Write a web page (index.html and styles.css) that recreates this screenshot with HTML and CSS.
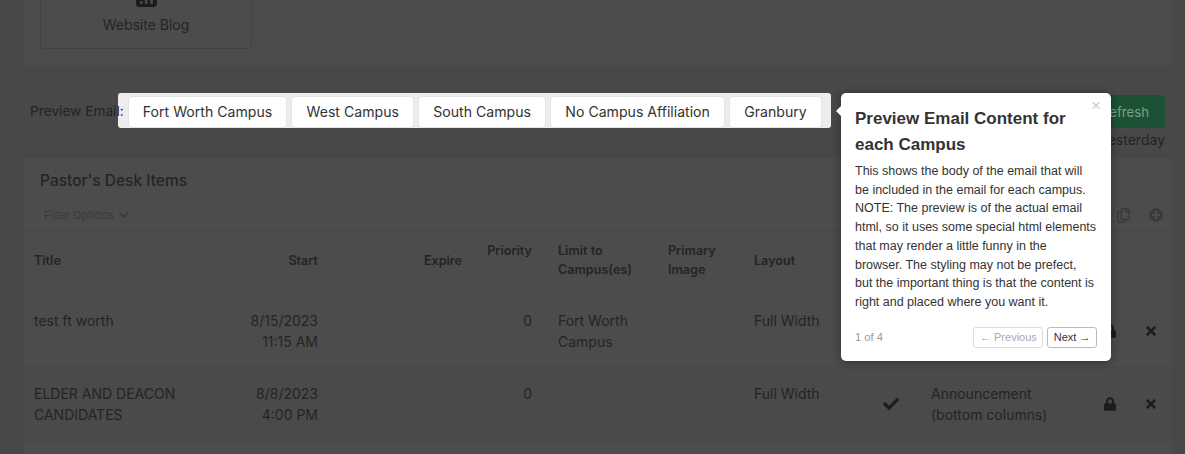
FILE: index.html
```html
<!DOCTYPE html>
<html lang="en">
<head>
<meta charset="utf-8">
<title>Pastor's Desk Items</title>
<link rel="stylesheet" href="styles.css">
</head>
<body>
<svg class="sprite" aria-hidden="true">
  <symbol id="i-check" viewBox="0 0 512 512"><path d="M173.898 439.404l-166.4-166.4c-9.997-9.997-9.997-26.206 0-36.204l36.203-36.204c9.997-9.998 26.207-9.998 36.204 0L192 312.69 432.095 72.596c9.997-9.997 26.207-9.997 36.204 0l36.203 36.204c9.997 9.997 9.997 26.206 0 36.204l-294.4 294.401c-9.998 9.997-26.207 9.997-36.204-.001z"/></symbol>
  <symbol id="i-times" viewBox="0 0 352 512"><path d="M242.72 256l100.07-100.07c12.28-12.28 12.28-32.19 0-44.48l-22.24-22.24c-12.28-12.28-32.19-12.28-44.48 0L176 189.28 75.93 89.21c-12.28-12.28-32.19-12.28-44.48 0L9.21 111.45c-12.28 12.28-12.28 32.19 0 44.48L109.28 256 9.21 356.07c-12.28 12.28-12.28 32.19 0 44.48l22.24 22.24c12.28 12.28 32.2 12.28 44.48 0L176 322.72l100.07 100.07c12.28 12.28 32.2 12.28 44.48 0l22.24-22.24c12.28-12.28 12.28-32.19 0-44.48L242.72 256z"/></symbol>
  <symbol id="i-lock" viewBox="0 0 448 512"><path d="M400 224h-24v-72C376 68.2 307.8 0 224 0S72 68.2 72 152v72H48c-26.5 0-48 21.5-48 48v192c0 26.5 21.5 48 48 48h352c26.5 0 48-21.5 48-48V272c0-26.5-21.5-48-48-48zm-104 0H152v-72c0-39.7 32.3-72 72-72s72 32.3 72 72v72z"/></symbol>
</svg>

<main class="page">
  <section class="card top-card">
    <a class="tile">
      <svg class="tile-icon" viewBox="0 0 448 448"><path d="M64 0C29 0 0 29 0 64v320c0 35 29 64 64 64h320c35 0 64-29 64-64V64c0-35-29-64-64-64H64zm48 320a32 32 0 1 1 0 64 32 32 0 1 1 0-64zM96 216c0-9 7-16 16-16 75 0 136 61 136 136v32c0 9-7 16-16 16h-24c-9 0-16-7-16-16v-32c0-44-36-80-80-80-9 0-16-7-16-16v-24zm0-112c0-9 7-16 16-16 137 0 248 111 248 248v32c0 9-7 16-16 16h-24c-9 0-16-7-16-16v-32c0-106-86-192-192-192-9 0-16-7-16-16v-24z"/></svg>
      <span>Website Blog</span>
    </a>
  </section>

  <section class="preview-row">
    <div class="preview-label">Preview Email:</div>
    <div class="campus-bar">
      <button class="campus">Fort Worth Campus</button>
      <button class="campus">West Campus</button>
      <button class="campus">South Campus</button>
      <button class="campus">No Campus Affiliation</button>
      <button class="campus">Granbury</button>
    </div>
    <div class="actions">
      <div class="action-buttons">
        <button class="btn btn-blue" aria-label="Action"></button>
        <button class="btn btn-green">Refresh</button>
      </div>
      <div class="action-note">yesterday</div>
    </div>
  </section>

  <section class="card table-card">
    <h2 class="table-title">Pastor's Desk Items</h2>
    <div class="filter-bar">
      <span class="filter-toggle">Filter Options
        <svg class="chevron" viewBox="0 0 12 8"><polyline points="1.5,1.5 6,6 10.5,1.5"/></svg>
      </span>
      <span class="filter-tools">
        <svg class="tool tool-copy" viewBox="0 0 448 512"><path d="M433.941 65.941l-51.882-51.882A48 48 0 0 0 348.118 0H176c-26.51 0-48 21.49-48 48v48H48c-26.51 0-48 21.49-48 48v320c0 26.51 21.49 48 48 48h224c26.51 0 48-21.49 48-48v-48h80c26.51 0 48-21.49 48-48V99.882a48 48 0 0 0-14.059-33.941zM266 464H54a6 6 0 0 1-6-6V150a6 6 0 0 1 6-6h74v224c0 26.51 21.49 48 48 48h96v42a6 6 0 0 1-6 6zm128-96H182a6 6 0 0 1-6-6V54a6 6 0 0 1 6-6h106v88c0 13.255 10.745 24 24 24h88v202a6 6 0 0 1-6 6zm6-256h-64V48h9.632c1.591 0 3.117.632 4.243 1.757l48.368 48.368a6 6 0 0 1 1.757 4.243V112z"/></svg>
        <svg class="tool tool-plus" viewBox="0 0 512 512"><path d="M256 8C119 8 8 119 8 256s111 248 248 248 248-111 248-248S393 8 256 8zm144 276c0 6.6-5.4 12-12 12h-92v92c0 6.6-5.4 12-12 12h-56c-6.6 0-12-5.4-12-12v-92h-92c-6.6 0-12-5.4-12-12v-56c0-6.6 5.4-12 12-12h92v-92c0-6.6 5.4-12 12-12h56c6.6 0 12 5.4 12 12v92h92c6.6 0 12 5.4 12 12v56z"/></svg>
      </span>
    </div>
    <table class="items">
      <colgroup>
        <col class="c-title"><col class="c-start"><col class="c-expire"><col class="c-priority"><col class="c-limit"><col class="c-image"><col class="c-layout"><col class="c-check"><col class="c-type"><col class="c-lock"><col class="c-del">
      </colgroup>
      <thead>
        <tr>
          <th>Title</th>
          <th class="num">Start</th>
          <th class="num">Expire</th>
          <th class="num top">Priority</th>
          <th class="limit two">Limit to Campus(es)</th>
          <th class="two">Primary Image</th>
          <th>Layout</th>
          <th></th><th></th><th></th><th></th>
        </tr>
      </thead>
      <tbody>
        <tr>
          <td>test ft worth</td>
          <td class="num">8/15/2023<br>11:15 AM</td>
          <td></td>
          <td class="num">0</td>
          <td class="limit">Fort Worth Campus</td>
          <td></td>
          <td>Full Width</td>
          <td></td>
          <td></td>
          <td class="mid"><svg class="ico lock"><use href="#i-lock"/></svg></td>
          <td class="mid"><svg class="ico del"><use href="#i-times"/></svg></td>
        </tr>
        <tr class="alt">
          <td>ELDER AND DEACON CANDIDATES</td>
          <td class="num">8/8/2023<br>4:00 PM</td>
          <td></td>
          <td class="num">0</td>
          <td class="limit"></td>
          <td></td>
          <td>Full Width</td>
          <td class="mid"><svg class="ico check"><use href="#i-check"/></svg></td>
          <td>Announcement (bottom columns)</td>
          <td class="mid"><svg class="ico lock"><use href="#i-lock"/></svg></td>
          <td class="mid"><svg class="ico del"><use href="#i-times"/></svg></td>
        </tr>
      </tbody>
    </table>
  </section>
</main>

<aside class="popover">
  <span class="popover-arrow"></span>
  <span class="popover-close">×</span>
  <h3 class="popover-title">Preview Email Content for each Campus</h3>
  <p class="popover-body">This shows the body of the email that will be included in the email for each campus. NOTE: The preview is of the actual email html, so it uses some special html elements that may render a little funny in the browser. The styling may not be prefect, but the important thing is that the content is right and placed where you want it.</p>
  <div class="popover-foot">
    <span class="popover-count">1 of 4</span>
    <span class="popover-nav">
      <button class="nav-btn nav-prev">← Previous</button>
      <button class="nav-btn nav-next">Next →</button>
    </span>
  </div>
</aside>
</body>
</html>
```
FILE: styles.css
```css
* { box-sizing: border-box; }
html, body { margin: 0; height: 100%; overflow: hidden; }
body {
  background: #484848;
  color: #242424;
  font-family: Inter, "Liberation Sans", sans-serif;
  font-size: 14px;
  line-height: 21px;
}
.sprite { display: none; }
.page { margin: -40px 13px 0 24px; }
.card { background: #4c4c4c; }

.top-card { height: 106px; padding: 0 16px; border-bottom: 1px solid #4a4a4a; }
.tile {
  display: flex;
  flex-direction: column;
  align-items: center;
  width: 212px;
  height: 89px;
  border: 1px solid #424242;
  border-radius: 3px;
  padding-top: 25px;
}
.tile-icon { width: 21px; height: 21px; fill: #1c1c1c; margin-bottom: 7px; }

.preview-row { display: flex; align-items: flex-start; height: 92px; padding: 27px 7px 0 6px; }
.preview-label { position: relative; z-index: 1; margin-top: 8px; font-size: 13.7px; white-space: nowrap; }
.campus-bar {
  display: flex;
  gap: 4px;
  margin-left: -6px;
  padding: 3px 9px 0 10px;
  height: 35px;
  background: #ededed;
  border-radius: 3px;
}
.campus {
  height: 32px;
  padding: 0 14.2px;
  background: #fff;
  color: #333;
  border: 1px solid #e4e4e4;
  border-radius: 4px;
  font: 14.1px/20px Inter, "Liberation Sans", sans-serif;
  white-space: nowrap;
}
.actions { margin-left: auto; display: flex; flex-direction: column; align-items: flex-end; }
.action-buttons { display: flex; align-items: flex-end; gap: 8px; height: 35px; }
.btn { border: 0; border-radius: 4px; font: 13.2px/20px Inter, "Liberation Sans", sans-serif; }
.btn-blue { width: 59px; height: 35px; background: #17335a; }
.btn-green { width: 80px; height: 33px; background: #1c5234; color: #7f9e8c; }
.action-note { margin-top: 1px; }

.table-card { min-height: 300px; }
.table-title {
  margin: 0;
  height: 45px;
  padding: 12px 16px 0;
  font-size: 15.5px;
  line-height: 21px;
  font-weight: 500;
  border-bottom: 1px solid #474747;
}
.filter-bar {
  display: flex;
  justify-content: space-between;
  align-items: center;
  height: 29px;
  padding: 0 9px 4px 20px;
  border-bottom: 1px solid #474747;
  font-size: 11px;
  color: #3a3a3a;
}
.filter-toggle { display: flex; align-items: center; gap: 5px; }
.chevron { width: 11px; height: 8px; fill: none; stroke: #3a3a3a; stroke-width: 2; }
.filter-tools { display: flex; align-items: center; gap: 19px; }
.tool { fill: #3a3a3a; }
.tool-copy { width: 13px; height: 15px; }
.tool-plus { width: 14px; height: 14px; }

.items { width: 100%; table-layout: fixed; border-collapse: collapse; }
.c-title { width: 176px; }
.c-start { width: 128px; }
.c-expire { width: 144px; }
.c-priority { width: 70px; }
.c-limit { width: 116px; }
.c-image { width: 86px; }
.c-layout { width: 116px; }
.c-check { width: 61px; }
.c-type { width: 169px; }
.c-lock { width: 40px; }
.c-del { width: 42px; }
.items th {
  height: 62px;
  padding: 0 10px 4px;
  font-size: 12.6px;
  line-height: 19px;
  font-weight: 600;
  text-align: left;
  vertical-align: middle;
}
.items th.two { padding-bottom: 6px; }
.items th.top { vertical-align: top; padding-top: 9px; }
.items td {
  height: 73px;
  padding: 15px 10px;
  vertical-align: top;
  border-top: 1px solid #474747;
}
.items .limit { padding-left: 16px; padding-right: 4px; }
.items .num { text-align: right; }
.items .mid { padding: 0 0 3px; text-align: center; vertical-align: middle; }
.alt td { background: #4a4a4a; border-bottom: 1px solid #474747; }
.ico { display: inline-block; fill: #1c1c1c; vertical-align: middle; }
.check { width: 16px; height: 16px; }
.lock { width: 12px; height: 14px; }
.del { width: 10px; height: 14px; }

.popover {
  position: absolute;
  left: 841px;
  top: 93px;
  width: 270px;
  height: 268px;
  padding: 13px 14px 0;
  background: #fff;
  border-radius: 5px;
  box-shadow: 0 1px 10px rgba(0, 0, 0, .4);
  font-family: "Liberation Sans", Arial, sans-serif;
  color: #333;
}
.popover-arrow {
  position: absolute;
  left: -5px;
  top: 13px;
  border-style: solid;
  border-width: 5px 5px 5px 0;
  border-color: transparent #fff transparent transparent;
}
.popover-close { position: absolute; right: 10px; top: 3px; font-size: 17px; line-height: 20px; color: #ccc; }
.popover-title { margin: 0; font-size: 17px; line-height: 26px; font-weight: 700; }
.popover-body { margin: 4px 0 0; font-size: 12.5px; line-height: 18.7px; }
.popover-foot { display: flex; justify-content: space-between; align-items: center; margin-top: 15px; }
.popover-count { font-size: 11.2px; color: #999; }
.popover-nav { display: flex; gap: 4px; }
.nav-btn {
  height: 21px;
  padding: 0 5.5px;
  background: #fff;
  border: 1px solid #bbb;
  border-radius: 3px;
  font: 11px/1 "Liberation Sans", Arial, sans-serif;
  color: #333;
}
.nav-prev { border-color: #ddd; color: #aaa; }
```
